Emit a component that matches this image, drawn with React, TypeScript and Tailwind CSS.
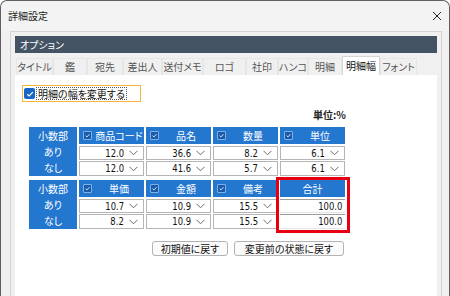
import React from "react";

const tabs: [string, number][] = [
  ["タイトル", 37],
  ["鑑", 34],
  ["宛先", 36],
  ["差出人", 39],
  ["送付メモ", 41],
  ["ロゴ", 43],
  ["社印", 32],
  ["ハンコ", 30],
  ["明細", 34],
  ["明細幅", 38],
  ["フォント", 37],
];

type Col = { name: string; vals: [string, string]; check: boolean; dd: boolean };

const table1: Col[] = [
  { name: "商品コード", vals: ["12.0", "12.0"], check: true, dd: true },
  { name: "品名", vals: ["36.6", "41.6"], check: true, dd: true },
  { name: "数量", vals: ["8.2", "5.7"], check: true, dd: true },
  { name: "単位", vals: ["6.1", "6.1"], check: true, dd: true },
];
const table2: Col[] = [
  { name: "単価", vals: ["10.7", "8.2"], check: true, dd: true },
  { name: "金額", vals: ["10.9", "10.9"], check: true, dd: true },
  { name: "備考", vals: ["15.5", "15.5"], check: true, dd: true },
  { name: "合計", vals: ["100.0", "100.0"], check: false, dd: false },
];

function Check({ size = 9 }: { size?: number }) {
  return (
    <svg width={size} height={size} viewBox="0 0 10 10" className="block">
      <polyline points="2.3,5.2 4.2,7 7.8,3.2" fill="none" stroke="#ffffff" strokeWidth="1.2" />
    </svg>
  );
}

function Chevron() {
  return (
    <svg width="9" height="6" viewBox="0 0 9 6" className="block">
      <polyline points="0.5,0.8 4.5,4.8 8.5,0.8" fill="none" stroke="#6b6b6b" strokeWidth="1" />
    </svg>
  );
}

function Cell({ v, dd, h }: { v: string; dd: boolean; h: string }) {
  return (
    <div
      className={`${h} bg-white flex items-center justify-end ${
        dd ? "border border-[#b5b5b5] pr-[5px]" : "border-t border-[#9c9c9c] border-b-[#e4e4e4] border-b pr-[3px]"
      }`}
    >
      <span className="font-['Liberation_Sans_Narrow','DejaVu_Sans_Condensed',sans-serif] text-[11px] leading-none text-[#111] scale-x-[0.85] origin-right">
        {v}
      </span>
      {dd && (
        <span className="ml-[5px]">
          <Chevron />
        </span>
      )}
    </div>
  );
}

function Table({ cols, highlight }: { cols: Col[]; highlight?: boolean }) {
  return (
    <div className="relative flex gap-[2px] w-[316px]">
      <div className="w-[48px] h-[49px] bg-[#2477cf] flex flex-col items-center text-white text-[10px] leading-none">
        <div className="h-[17px] flex items-center">小数部</div>
        <div className="h-[16px] flex items-center">あり</div>
        <div className="h-[16px] flex items-center">なし</div>
      </div>
      {cols.map((c) => (
        <div key={c.name} className="w-[65px] flex flex-col">
          <div className="h-[17px] bg-[#2477cf] flex items-center text-white text-[10px] leading-none">
            {c.check ? (
              <>
                <span className="ml-[4px] w-[9px] h-[9px] bg-[#1a5bab] border border-[#7fb0e6] rounded-[1px] flex items-center justify-center">
                  <Check size={7} />
                </span>
                <span className="flex-1 text-center pl-[2px]">{c.name}</span>
              </>
            ) : (
              <span className="flex-1 text-center">{c.name}</span>
            )}
          </div>
          <div className="mt-[2px]">
            <Cell v={c.vals[0]} dd={c.dd} h="h-[14px]" />
          </div>
          <div className="mt-[1px]">
            <Cell v={c.vals[1]} dd={c.dd} h="h-[15px]" />
          </div>
        </div>
      ))}
      {highlight && (
        <div className="absolute left-[247px] top-[-3px] w-[74px] h-[56px] border-[3px] border-[#e60012]" />
      )}
    </div>
  );
}

export default function App() {
  return (
    <div className="w-[450px] h-[296px] overflow-hidden bg-[#f0f0f0] border border-[#5f5f5f] border-b-0 rounded-t-[7px] font-['Noto_Sans_CJK_JP',sans-serif] [font-feature-settings:'palt'] text-[#1a1a1a]">
      <div className="h-[30px] flex items-center justify-between pl-[7px] pr-[7px] bg-[#f3f3f3] rounded-t-[7px]">
        <span className="text-[10px] leading-none text-[#222]">詳細設定</span>
        <svg width="10" height="10" viewBox="0 0 10 10" className="block">
          <path d="M1 1L9 9M9 1L1 9" stroke="#222" strokeWidth="1" />
        </svg>
      </div>
      <div className="ml-[9px] w-[432px] h-[270px] border border-[#d4d4d4] px-[4px] pt-[4px]">
        <div className="h-[17px] bg-[#435363] flex items-center pl-[5px] text-white text-[10px] leading-none">
          オプション
        </div>
        <div className="mt-[3px] h-[19px] flex items-end pl-[1px]">
          {tabs.map(([t, w]) =>
            t === "明細幅" ? (
              <div
                key={t}
                style={{ width: w }}
                className="h-[19px] bg-white border-x border-t border-[#d6d6d6] flex items-center justify-center text-[10px] leading-none text-[#111]"
              >
                {t}
              </div>
            ) : (
              <div
                key={t}
                style={{ width: w }}
                className="h-[17px] border-x border-t border-[#e6e6e6] flex items-center justify-center text-[10px] leading-none text-[#555]"
              >
                {t}
              </div>
            )
          )}
        </div>
        <div className="bg-white h-[230px] flex flex-col">
          <div className="ml-[7px] mt-[10px] w-[119px] h-[17px] border border-[#f5b63c] flex items-center pl-[1px]">
            <span className="w-[11px] h-[11px] bg-[#1765c8] rounded-[2px] flex items-center justify-center">
              <Check size={10} />
            </span>
            <span className="ml-[1px] h-[13px] px-[1px] border border-dotted border-[#555] flex items-center text-[10px] leading-none text-[#111]">
              明細の幅を変更する
            </span>
          </div>
          <div className="ml-[14px] w-[317px] mt-[6px] h-[14px] flex items-center justify-end text-[10px] font-bold leading-none text-[#222]">
            単位:%
          </div>
          <div className="ml-[14px] mt-[5px]">
            <Table cols={table1} />
          </div>
          <div className="ml-[14px] mt-[4px]">
            <Table cols={table2} highlight />
          </div>
          <div className="ml-[14px] w-[316px] mt-[12px] flex justify-end gap-[6px] pr-[1px]">
            <button className="w-[76px] h-[15px] bg-[#fbfbfb] border border-[#b3b3b3] rounded-[3px] text-[10px] leading-none text-[#111] flex items-center justify-center">
              初期値に戻す
            </button>
            <button className="w-[110px] h-[15px] bg-[#fbfbfb] border border-[#b3b3b3] rounded-[3px] text-[10px] leading-none text-[#111] flex items-center justify-center">
              変更前の状態に戻す
            </button>
          </div>
        </div>
      </div>
    </div>
  );
}
